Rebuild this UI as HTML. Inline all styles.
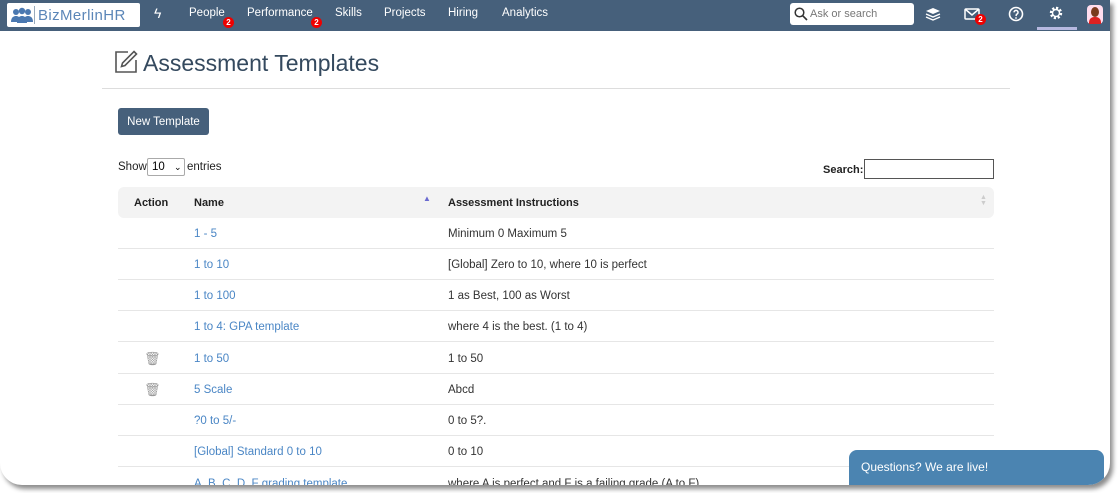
<!DOCTYPE html>
<html><head><style>
*{margin:0;padding:0;box-sizing:border-box}
body{width:1120px;height:493px;background:#fff;font-family:"Liberation Sans",sans-serif;overflow:hidden;position:relative}
.card{position:absolute;left:0;top:0;width:1110px;height:485px;background:#fff;border-radius:0 0 22px 22px;box-shadow:3px 4px 5px rgba(0,0,0,.45);overflow:hidden}
.nav{position:absolute;left:0;top:0;width:1110px;height:31px;background:#46607b}
.nav span{position:absolute;top:7px;color:#fff;font-size:11.5px}
.badge{position:absolute;width:11px;height:11px;border-radius:50%;background:#e00;color:#fff;font-size:8px;font-weight:bold;text-align:center;line-height:11px}
.logo{position:absolute;left:7px;top:3px;width:133px;height:24px;background:#fff;border-radius:2px}
.logo b{position:absolute;left:31px;top:4px;font-weight:normal;font-size:15px;color:#5b86b8;letter-spacing:.4px}
.search{position:absolute;left:790px;top:3px;width:124px;height:22px;background:#fff;border-radius:3px}
.search span{position:absolute;left:20px;top:5px;color:#777;font-size:11px}
h1{position:absolute;left:143px;top:50px;font-size:23px;font-weight:normal;color:#34495e}
.hr{position:absolute;left:102px;top:88px;width:908px;height:1px;background:#ddd}
.btn{position:absolute;left:118px;top:108px;width:91px;height:27px;background:#46607b;border-radius:3px;color:#fff;font-size:11.5px;line-height:28px;text-align:center}
.small{position:absolute;font-size:11.5px;color:#222}
.sel{position:absolute;left:147px;top:158px;width:38px;height:18px;border:1px solid #aaa;border-radius:2px;font-size:11.5px;padding-left:4px;line-height:16px}
.sbox{position:absolute;left:864px;top:159px;width:130px;height:20px;border:1px solid #555}
.th{position:absolute;left:118px;top:187px;width:876px;height:31px;background:#f3f3f3;border-radius:6px}
.th span{position:absolute;top:10px;font-size:11px;font-weight:bold;color:#222}
.row{position:absolute;left:118px;width:876px;height:31px;border-bottom:1px solid #e6e6e6}
.row a{position:absolute;left:76px;top:10px;font-size:11.5px;color:#4a86c5}
.row i{position:absolute;left:330px;top:10px;font-size:11.5px;color:#333;font-style:normal}
.chat{position:absolute;left:849px;top:450px;width:255px;height:40px;background:#4b84b1;border-radius:8px 8px 0 0;color:#fff;font-size:12px;padding:10px 0 0 12px}
</style></head><body>
<div class="card">
<div class="nav">
 <div class="logo"><svg width="24" height="20" style="position:absolute;left:3px;top:3px" viewBox="0 0 24 20"><circle cx="6" cy="6" r="3" fill="#4a78b0"/><circle cx="12" cy="5" r="3.2" fill="#4a78b0"/><circle cx="18" cy="6" r="3" fill="#4a78b0"/><path d="M1 16c0-5 3-6 5-6s5 1 5 6zM7 17c0-6 3-7 5-7s5 1 5 7zM13 16c0-5 3-6 5-6s5 1 5 6z" fill="#4a78b0"/></svg><div style="position:absolute;left:27px;top:3px;width:1px;height:18px;background:#9ab"></div><b>BizMerlinHR</b></div>
 <span style="left:154px;top:5px;font-size:14px">ϟ</span>
 <span style="left:189px">People</span><div class="badge" style="left:223px;top:17px">2</div>
 <span style="left:247px">Performance</span><div class="badge" style="left:311px;top:17px">2</div>
 <span style="left:335px">Skills</span>
 <span style="left:384px">Projects</span>
 <span style="left:448px">Hiring</span>
 <span style="left:502px">Analytics</span>
 <div class="search"><svg width="14" height="14" style="position:absolute;left:4px;top:4px" viewBox="0 0 14 14"><circle cx="5.5" cy="5.5" r="4.3" stroke="#333" stroke-width="1.5" fill="none"/><path d="M8.7 8.7L13 13" stroke="#333" stroke-width="1.6"/></svg><span>Ask or search</span></div>
 <svg width="16" height="14" style="position:absolute;left:925px;top:7px" viewBox="0 0 16 14"><path d="M8 1L15 4 8 7 1 4z" fill="#fff"/><path d="M1 7l7 3 7-3M1 10l7 3 7-3" stroke="#fff" stroke-width="1.4" fill="none"/></svg>
 <svg width="16" height="12" style="position:absolute;left:964px;top:8px" viewBox="0 0 16 12"><rect x="1" y="1" width="14" height="10" rx="1" stroke="#fff" stroke-width="1.5" fill="none"/><path d="M1 1l7 6 7-6" stroke="#fff" stroke-width="1.5" fill="none"/></svg>
 <div class="badge" style="left:975px;top:14px">2</div>
 <svg width="16" height="16" style="position:absolute;left:1008px;top:6px" viewBox="0 0 16 16"><circle cx="8" cy="8" r="6.5" stroke="#fff" stroke-width="1.6" fill="none"/><path d="M6 6.3a2 2 0 1 1 2.5 2L8 10" stroke="#fff" stroke-width="1.5" fill="none"/><circle cx="8" cy="12" r=".9" fill="#fff"/></svg>
 <svg width="16" height="16" style="position:absolute;left:1048px;top:5px" viewBox="0 0 16 16"><circle cx="8" cy="8" r="5" stroke="#fff" stroke-width="2.4" stroke-dasharray="2.2 1.7" fill="none"/><circle cx="8" cy="8" r="3.5" stroke="#fff" stroke-width="1.4" fill="none"/></svg>
 <div style="position:absolute;left:1037px;top:27px;width:40px;height:3px;background:#b7b9e0"></div>
 <div style="position:absolute;left:1087px;top:5px;width:16px;height:19px;background:#fde;border-radius:4px"><div style="position:absolute;left:4px;top:2px;width:8px;height:10px;border-radius:50%;background:#7a3b1e"></div><div style="position:absolute;left:2px;top:12px;width:12px;height:7px;border-radius:5px 5px 0 0;background:#d22"></div></div>
</div>
<svg width="24" height="24" style="position:absolute;left:114px;top:50px" viewBox="0 0 24 24"><path d="M14 2H2v20h20V10" stroke="#555" stroke-width="1.6" fill="none"/><path d="M20 1.5l2.5 2.5L11 15.5l-3.5 1 1-3.5z" stroke="#555" stroke-width="1.6" fill="none"/></svg>
<h1>Assessment Templates</h1>
<div class="hr"></div>
<div class="btn">New Template</div>
<div class="small" style="left:118px;top:161px">Show</div>
<div class="sel">10<span style="position:absolute;left:26px;top:0;font-size:9px">⌄</span></div>
<div class="small" style="left:187px;top:161px">entries</div>
<div class="small" style="left:823px;top:164px;font-weight:bold;font-size:11px">Search:</div>
<div class="sbox"></div>
<div class="th"><span style="left:16px">Action</span><span style="left:76px">Name</span><span style="left:305px;top:7px;font-size:8px;color:#6a6ad0">▲</span><span style="left:330px">Assessment Instructions</span><span style="left:862px;top:8px;font-size:7px;color:#ccc;line-height:6px">▲<br>▼</span></div>
<div class="row" style="top:218px"><a>1 - 5</a><i>Minimum 0 Maximum 5</i></div>
<div class="row" style="top:249px"><a>1 to 10</a><i>[Global] Zero to 10, where 10 is perfect</i></div>
<div class="row" style="top:280px"><a>1 to 100</a><i>1 as Best, 100 as Worst</i></div>
<div class="row" style="top:311px"><a>1 to 4: GPA template</a><i>where 4 is the best. (1 to 4)</i></div>
<div class="row" style="top:343px"><span style="position:absolute;left:26px;top:8px;color:#999;font-size:13px">🗑</span><a>1 to 50</a><i>1 to 50</i></div>
<div class="row" style="top:374px"><span style="position:absolute;left:26px;top:8px;color:#999;font-size:13px">🗑</span><a>5 Scale</a><i>Abcd</i></div>
<div class="row" style="top:405px"><a>?0 to 5/-</a><i>0 to 5?.</i></div>
<div class="row" style="top:436px"><a>[Global] Standard 0 to 10</a><i>0 to 10</i></div>
<div class="row" style="top:468px;border:none"><a>A, B, C, D, F grading template</a><i>where A is perfect and F is a failing grade (A to F)</i></div>
<div class="chat">Questions? We are live!</div>
</div>
</body></html>
